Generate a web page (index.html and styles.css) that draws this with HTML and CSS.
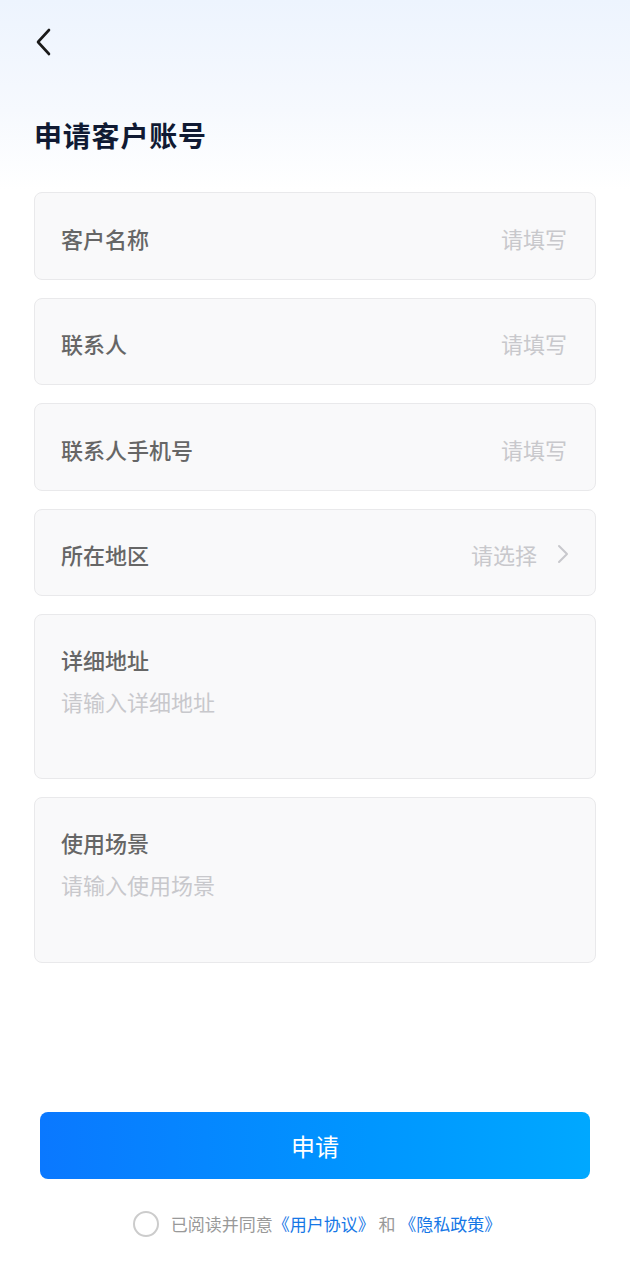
FILE: index.html
```html
<!DOCTYPE html>
<html lang="zh-CN">
<head>
<meta charset="utf-8">
<title>申请客户账号</title>
<link rel="stylesheet" href="styles.css">
</head>
<body>
<div class="page">
  <div class="nav">
    <svg class="back" width="20" height="30" viewBox="0 0 20 30"><path d="M15 3 L4 15 L15 27" fill="none" stroke="#1a1a1a" stroke-width="2.6" stroke-linecap="round" stroke-linejoin="round"/></svg>
  </div>
  <h1 class="title">申请客户账号</h1>
  <div class="form">
    <div class="field">
      <span class="label">客户名称</span>
      <span class="ph">请填写</span>
    </div>
    <div class="field">
      <span class="label">联系人</span>
      <span class="ph">请填写</span>
    </div>
    <div class="field">
      <span class="label">联系人手机号</span>
      <span class="ph">请填写</span>
    </div>
    <div class="field field-select">
      <span class="label">所在地区</span>
      <span class="ph">请选择<svg class="chev" width="12" height="20" viewBox="0 0 12 20"><path d="M2 2 L10 10 L2 18" fill="none" stroke="#c8c8cc" stroke-width="2" stroke-linecap="round" stroke-linejoin="round"/></svg></span>
    </div>
    <div class="area">
      <span class="label">详细地址</span>
      <span class="ph">请输入详细地址</span>
    </div>
    <div class="area">
      <span class="label">使用场景</span>
      <span class="ph">请输入使用场景</span>
    </div>
  </div>
  <div class="footer">
    <button class="submit">申请</button>
    <div class="agree">
      <span class="radio"></span>
      <span class="agree-text">已阅读并同意<a class="link">《用户协议》</a> 和 <a class="link">《隐私政策》</a></span>
    </div>
  </div>
</div>
</body>
</html>
```
FILE: styles.css
```css
* { box-sizing: border-box; }
html, body {
  margin: 0;
  padding: 0;
}
body {
  font-family: "Noto Sans CJK SC", "Noto Sans", sans-serif;
  background: linear-gradient(180deg, #edf4fe 0px, #f6f9fe 110px, #ffffff 190px, #ffffff 100%);
  width: 630px;
  min-height: 1280px;
}
.page {
  padding: 0 34px;
}
.nav {
  height: 100px;
  padding-top: 27px;
}
.back {
  display: block;
}
.title {
  margin: 0;
  font-size: 28px;
  line-height: 40px;
  margin-top: 15px;
  font-weight: 700;
  color: #101a33;
  letter-spacing: 0.8px;
}
.form {
  margin-top: 37px;
  display: flex;
  flex-direction: column;
  gap: 18px;
}
.field {
  height: 87.5px;
  background: #f9f9fa;
  border: 1.5px solid #e9e9eb;
  border-radius: 8px;
  display: flex;
  align-items: center;
  justify-content: space-between;
  padding: 4px 28px 0 26px;
}
.field-select { height: 87px; padding-right: 26px; }
.label {
  font-size: 22px;
  color: #666666;
  font-weight: 500;
  line-height: 30px;
}
.ph {
  font-size: 22px;
  color: #c8c8cc;
  line-height: 30px;
  display: flex;
  align-items: center;
}
.chev { margin-left: 20px; }
.area {
  height: 165.5px;
  background: #f9f9fa;
  border: 1.5px solid #e9e9eb;
  border-radius: 8px;
  display: flex;
  flex-direction: column;
  padding: 29px 26px 0;
  gap: 12px;
}
.footer {
  margin-top: 149px;
  padding: 0 6px;
}
.submit {
  display: block;
  width: 100%;
  height: 67px;
  border: none;
  border-radius: 8px;
  background: linear-gradient(90deg, #0a78ff 0%, #0096ff 60%, #00a8ff 100%);
  color: #ffffff;
  font-family: inherit;
  font-size: 24px;
  font-weight: 400;
}
.agree {
  margin-top: 32px;
  display: flex;
  align-items: center;
  justify-content: center;
  gap: 12px;
  padding-left: 4px;
}
.radio {
  width: 26px;
  height: 26px;
  border: 2px solid #cccccc;
  border-radius: 50%;
  background: #fff;
}
.agree-text {
  font-size: 17px;
  color: #999999;
  line-height: 24px;
  white-space: pre;
}
.link {
  color: #1677e6;
}
```
